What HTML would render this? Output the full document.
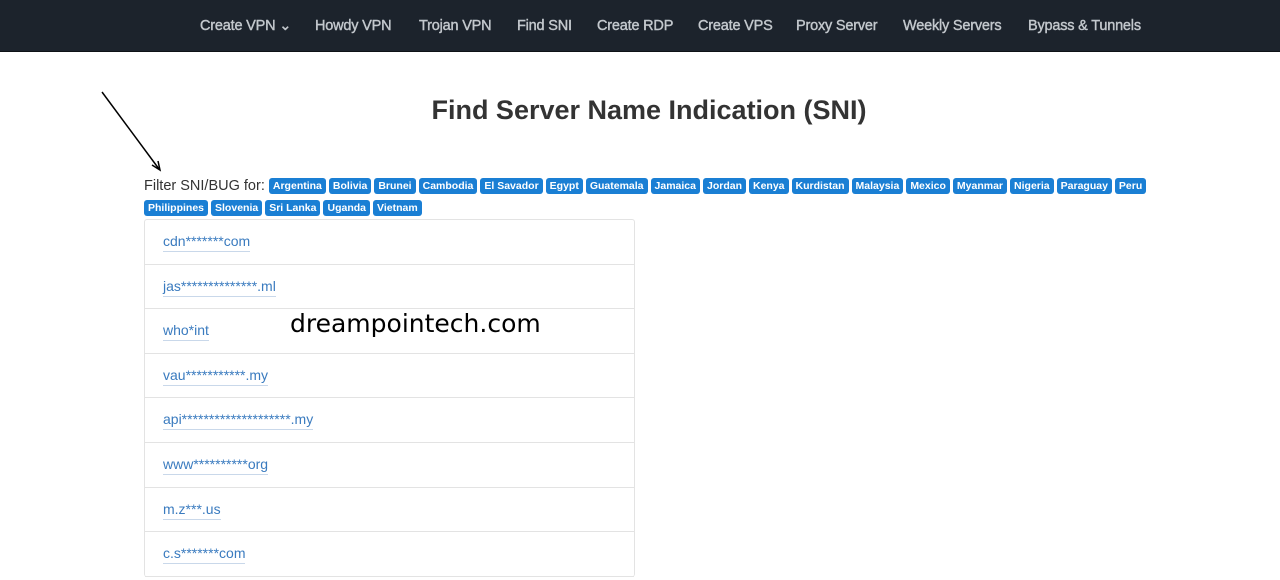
<!DOCTYPE html>
<html><head><style>
html,body{margin:0;width:1280px;height:580px;overflow:hidden;background:#fff;font-family:"Liberation Sans",sans-serif;position:relative}
.nav{height:51px;background:#1c232c;border-bottom:1px solid #0e1216}
.nav span{position:absolute;top:18px;color:#c3c8cd;font-size:14.5px;-webkit-text-stroke:0.4px #c3c8cd;letter-spacing:-0.2px}
h1{position:absolute;top:95px;left:0;width:1298px;text-align:center;margin:0;font-size:27px;color:#333;font-weight:bold}
.f{position:absolute;left:144px;top:175px;width:1010px;font-size:14.5px;color:#333;line-height:22px}
.b{display:inline-block;background:#1a7fd4;color:#fff;font-size:10.5px;font-weight:bold;padding:0 4px;height:16px;line-height:16px;border-radius:3px;margin-right:3px;vertical-align:1px}
.list{position:absolute;left:144px;top:219px;width:489px;border:1px solid #e3e3e3;border-bottom:none;border-radius:3px}
.list div{height:43.6px;border-bottom:1px solid #e3e3e3;padding-left:18px;line-height:42px;font-size:14px}
.list a{color:#3a7bbf;text-decoration:none;border-bottom:1px solid #c9d8ea;padding-bottom:2px}
.wm{position:absolute;left:290px;top:309px;font-family:"DejaVu Sans",sans-serif;font-size:25px;color:#000}
</style></head><body>
<div class="nav">
<span style="left:200px">Create VPN ⌄</span><span style="left:315px">Howdy VPN</span><span style="left:419px">Trojan VPN</span><span style="left:517px">Find SNI</span><span style="left:597px">Create RDP</span><span style="left:698px">Create VPS</span><span style="left:796px">Proxy Server</span><span style="left:903px">Weekly Servers</span><span style="left:1028px">Bypass &amp; Tunnels</span>
</div>
<h1>Find Server Name Indication (SNI)</h1>
<svg style="position:absolute;left:0;top:0" width="200" height="200"><line x1="102" y1="92" x2="159" y2="169" stroke="#000" stroke-width="1.5"/><path d="M152 165 L160 170 L158 161" fill="none" stroke="#000" stroke-width="1.5"/></svg>
<div class="f">Filter SNI/BUG for: <span class="b">Argentina</span><span class="b">Bolivia</span><span class="b">Brunei</span><span class="b">Cambodia</span><span class="b">El Savador</span><span class="b">Egypt</span><span class="b">Guatemala</span><span class="b">Jamaica</span><span class="b">Jordan</span><span class="b">Kenya</span><span class="b">Kurdistan</span><span class="b">Malaysia</span><span class="b">Mexico</span><span class="b">Myanmar</span><span class="b">Nigeria</span><span class="b">Paraguay</span><span class="b">Peru</span><br><span class="b">Philippines</span><span class="b">Slovenia</span><span class="b">Sri Lanka</span><span class="b">Uganda</span><span class="b">Vietnam</span></div>
<div class="list">
<div><a>cdn*******com</a></div><div><a>jas**************.ml</a></div><div><a>who*int</a></div><div><a>vau***********.my</a></div><div><a>api********************.my</a></div><div><a>www**********org</a></div><div><a>m.z***.us</a></div><div><a>c.s*******com</a></div>
</div>
<div class="wm">dreampointech.com</div>
</body></html>
